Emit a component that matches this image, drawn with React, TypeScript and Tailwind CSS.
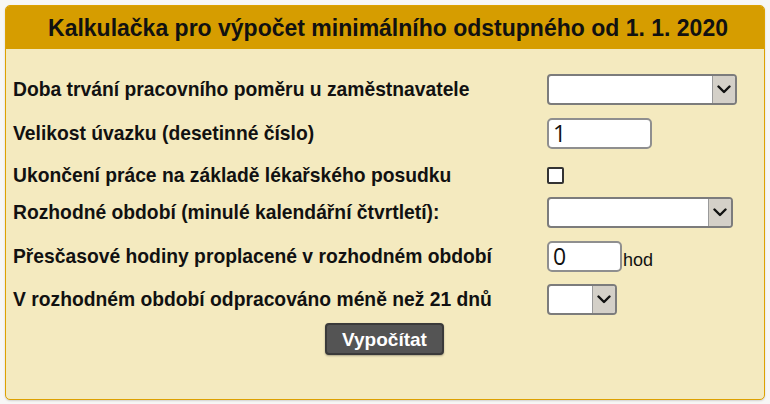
import React from "react";

function Chevron() {
  return (
    <svg width="14" height="9" viewBox="0 0 14 9" fill="none">
      <path d="M1.5 1.5 L7 7 L12.5 1.5" stroke="#111" strokeWidth="2.4" strokeLinecap="round" strokeLinejoin="round" />
    </svg>
  );
}

function Select({ width }: { width: string }) {
  return (
    <div className={`flex h-[31px] ${width} overflow-hidden rounded-[4px] border-2 border-[#7c7c7c] bg-white`}>
      <div className="flex-1" />
      <div className="flex w-[23px] items-center justify-center border-l border-[#9a9a9a] bg-[#d4d0c8]">
        <Chevron />
      </div>
    </div>
  );
}

function Row({ label, children, className }: { label: string; children: React.ReactNode; className?: string }) {
  return (
    <div className={`flex items-center ${className ?? ""}`}>
      <div className="w-[534px] flex-none text-[19.3px] font-bold leading-none text-[#111]">{label}</div>
      {children}
    </div>
  );
}

export default function App() {
  return (
    <div className="min-h-[404px] w-[770px] bg-[#f7f7f5] p-[5px] pr-[5px]" style={{ fontFamily: '"Liberation Sans", Arial, sans-serif' }}>
      <div className="h-[395px] w-[760px] overflow-hidden rounded-[5px] border border-[#dda100] bg-[#f4eabf] shadow-[0_1px_2px_rgba(0,0,0,0.15)]">
        <div className="flex h-[43px] items-center justify-center bg-[#d69d00] pl-[6px] pt-[1px]">
          <h1 className="text-[23px] font-bold leading-none text-[#111]">Kalkulačka pro výpočet minimálního odstupného od 1. 1. 2020</h1>
        </div>
        <div className="flex flex-col pl-[7px] pt-[25px]">
          <Row label="Doba trvání pracovního poměru u zaměstnavatele" className="h-[31px]">
            <Select width="w-[190px]" />
          </Row>
          <Row label="Velikost úvazku (desetinné číslo)" className="mt-[13px] h-[31px]">
            <div className="flex h-[31px] w-[105px] items-center rounded-[5px] border-2 border-[#8f8f8f] bg-white pl-[4px] text-[23px] leading-none text-[#111]" style={{ fontFamily: '"Open Sans", sans-serif' }}>
              1
            </div>
          </Row>
          <Row label="Ukončení práce na základě lékařského posudku" className="mt-[18px] h-[17px]">
            <div className="h-[17px] w-[17px] rounded-[2px] border-2 border-[#333] bg-white" />
          </Row>
          <Row label="Rozhodné období (minulé kalendářní čtvrtletí):" className="mt-[13px] h-[31px]">
            <Select width="w-[186px]" />
          </Row>
          <Row label="Přesčasové hodiny proplacené v rozhodném období" className="mt-[13px] h-[31px]">
            <div className="flex h-[31px] w-[75px] items-center rounded-[5px] border-2 border-[#8f8f8f] bg-white pl-[4px] text-[23px] leading-none text-[#111]" style={{ fontFamily: '"Open Sans", sans-serif' }}>
              0
            </div>
            <span className="ml-[1px] pt-[6px] text-[18px] leading-none text-[#111]">hod</span>
          </Row>
          <Row label="V rozhodném období odpracováno méně než 21 dnů" className="mt-[12px] h-[31px]">
            <Select width="w-[70px]" />
          </Row>
          <div className="mt-[8px] flex pl-[312px]">
            <button className="flex h-[32px] w-[119px] items-center justify-center rounded-[4px] border-2 border-[#3a3a3a] bg-[#545454] text-[19px] font-bold leading-none text-white shadow-[0_1px_2px_rgba(0,0,0,0.3)]">
              Vypočítat
            </button>
          </div>
        </div>
      </div>
    </div>
  );
}
